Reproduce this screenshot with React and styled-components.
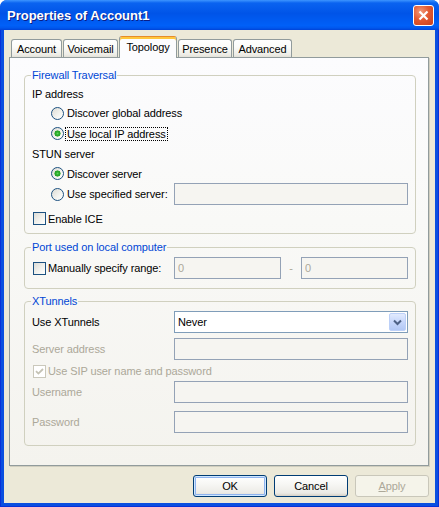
import React from "react";
import styled, { createGlobalStyle } from "styled-components";

const GlobalStyle = createGlobalStyle`
  html, body {
    margin: 0;
    padding: 0;
    background: #fff;
  }
  body {
    font-family: "Liberation Sans", Arial, sans-serif;
    font-size: 11px;
    letter-spacing: -0.1px;
  }
  * {
    box-sizing: border-box;
  }
`;

const Window = styled.div`
  width: 439px;
  height: 507px;
  display: flex;
  flex-direction: column;
  background: #0a4fe0;
  border-radius: 7px 7px 0 0;
  overflow: hidden;
`;

const TitleBar = styled.div`
  height: 30px;
  flex: none;
  display: flex;
  align-items: center;
  justify-content: space-between;
  padding: 0 5px 0 7px;
  background: linear-gradient(
    to bottom,
    #3d95ff 0%,
    #0a63f0 10%,
    #0054e8 45%,
    #0060f8 85%,
    #0058ee 93%,
    #0043d8 100%
  );
`;

const Title = styled.div`
  color: #fff;
  font-weight: bold;
  font-size: 13px;
  letter-spacing: 0;
  text-shadow: 1px 1px 0 #0a1d84;
`;

const CloseButton = styled.div`
  width: 21px;
  height: 21px;
  border: 1px solid #fff;
  border-radius: 3px;
  background: radial-gradient(circle at 35% 30%, #f19a7b 0%, #e35a32 45%, #c8401d 100%);
  display: flex;
  align-items: center;
  justify-content: center;
`;

const Frame = styled.div`
  flex: 1;
  display: flex;
  padding: 0 4px 4px;
  box-shadow: inset 1px 0 #0831d9, inset -1px 0 #0831d9, inset 0 -1px #0831d9;
`;

const Body = styled.div`
  flex: 1;
  display: flex;
  flex-direction: column;
  background: #ece9d8;
  padding: 6px 6px 0 5px;
`;

const TabRow = styled.div`
  height: 21px;
  display: flex;
  align-items: flex-end;
  gap: 1px;
  margin-left: 2px;
`;

const Tab = styled.div`
  width: ${(p) => p.$w}px;
  height: ${(p) => (p.$active ? 22 : 18)}px;
  margin-bottom: ${(p) => (p.$active ? -1 : 0)}px;
  position: relative;
  z-index: ${(p) => (p.$active ? 1 : 0)};
  display: flex;
  align-items: center;
  justify-content: center;
  padding-bottom: ${(p) => (p.$active ? 1 : 0)}px;
  border: 1px solid #919b9c;
  border-bottom: none;
  border-radius: 3px 3px 0 0;
  color: #000;
  background: ${(p) =>
    p.$active
      ? "#fcfcfe"
      : "linear-gradient(to bottom, #ffffff 0%, #fbfbf9 40%, #eeede7 85%, #e3e1d8 100%)"};
  border-top-color: ${(p) => (p.$active ? "#e68b2c" : "#919b9c")};
  box-shadow: ${(p) => (p.$active ? "inset 0 2px 0 #ffc73c" : "none")};
`;

const Panel = styled.div`
  height: 409px;
  flex: none;
  display: flex;
  flex-direction: column;
  padding: 11px 12px 0 14px;
  border: 1px solid #919b9c;
  background: linear-gradient(to bottom, #fcfcfe 0%, #f9f9f7 40%, #f4f3ee 100%);
  box-shadow: 1px 1px 0 #d0cebf;
`;

const Group = styled.fieldset`
  margin: ${(p) => p.$mt || 0}px 0 0;
  padding: 3px 7px ${(p) => p.$pb}px;
  border: 1px solid #d0d0bf;
  border-radius: 4px;
  min-width: 0;
`;

const Legend = styled.legend`
  padding: 0 1px;
  margin-left: -1px;
  color: #0046d5;
  line-height: 13px;
  font-size: 11px;
`;

const Row = styled.div`
  display: grid;
  grid-template-columns: 142px 1fr;
  align-items: center;
  height: ${(p) => p.$h || 20}px;
  margin-top: ${(p) => p.$mt || 0}px;
  color: ${(p) => (p.$disabled ? "#aca899" : "#000")};
  white-space: nowrap;
`;

const Option = styled.label`
  display: flex;
  align-items: center;
  gap: ${(p) => p.$gap || 3}px;
  padding-left: ${(p) => p.$indent || 0}px;
  color: ${(p) => (p.$disabled ? "#aca899" : "#000")};
`;

const Radio = styled.span`
  width: 13px;
  height: 13px;
  flex: none;
  border-radius: 50%;
  border: 1px solid #1c5180;
  background: ${(p) =>
    p.$checked
      ? "radial-gradient(circle, #5fd65f 0, #2fae2f 1.5px, #21a121 2.8px, transparent 3.3px), linear-gradient(135deg, #dcdbd4 0%, #f4f4f0 60%, #ffffff 100%)"
      : "linear-gradient(135deg, #dcdbd4 0%, #f4f4f0 60%, #ffffff 100%)"};
`;

const Box = styled.span`
  width: 13px;
  height: 13px;
  flex: none;
  margin-left: 1px;
  display: flex;
  align-items: center;
  justify-content: center;
  border: 1px solid ${(p) => (p.$disabled ? "#cac8bb" : "#1c5180")};
  background: ${(p) =>
    p.$disabled ? "#fff" : "linear-gradient(135deg, #dcdcd7 0%, #f3f3ef 60%, #ffffff 100%)"};
`;

const Focus = styled.span`
  outline: 1px dotted #000;
  outline-offset: 0;
  padding: 0 1px;
`;

const Field = styled.input`
  width: 100%;
  height: 22px;
  margin: 0;
  padding: 0 3px;
  border: 1px solid #94a2b6;
  background: #f6f5f1;
  font: inherit;
  color: #aca899;
  outline: none;
`;

const PortFields = styled.div`
  display: grid;
  grid-template-columns: 107px 1fr 107px;
  align-items: center;
`;

const Dash = styled.span`
  text-align: center;
  color: #aca899;
`;

const Combo = styled.div`
  height: 22px;
  display: flex;
  align-items: center;
  justify-content: space-between;
  padding: 1px 1px 1px 3px;
  border: 1px solid #7f9db9;
  background: #fff;
  color: #000;
`;

const DropButton = styled.span`
  width: 17px;
  height: 18px;
  display: flex;
  align-items: center;
  justify-content: center;
  border: 1px solid #bcd0f8;
  border-radius: 2px;
  background: linear-gradient(to bottom, #e2ebfe 0%, #c7d7fb 50%, #b3c8f5 100%);
`;

const ButtonRow = styled.div`
  display: flex;
  justify-content: flex-end;
  gap: 7px;
  margin-top: 9px;
`;

const Button = styled.div`
  width: 74px;
  height: 22px;
  display: flex;
  align-items: center;
  justify-content: center;
  border: 1px solid ${(p) => (p.$disabled ? "#c9c7ba" : "#003c74")};
  border-radius: 3px;
  color: ${(p) => (p.$disabled ? "#aca899" : "#000")};
  background: ${(p) =>
    p.$disabled
      ? "#f5f4ea"
      : "linear-gradient(to bottom, #ffffff 0%, #f7f7f4 40%, #ecebe6 85%, #d6d0c5 100%)"};
  box-shadow: ${(p) =>
    p.$default ? "inset 0 0 0 1px #cee7ff, inset 0 0 0 2px #8fb3ee" : "none"};
`;

const Underline = styled.span`
  text-decoration: underline;
`;

const CheckMark = ({ color }) => (
  <svg width="9" height="9" viewBox="0 0 9 9">
    <path d="M1 4.2 L3.4 6.6 L8 2" fill="none" stroke={color} strokeWidth="1.8" />
  </svg>
);

const App = () => {
  const tabs = [
    { label: "Account", w: 51 },
    { label: "Voicemail", w: 55 },
    { label: "Topology", w: 58, active: true },
    { label: "Presence", w: 54 },
    { label: "Advanced", w: 59 },
  ];

  return (
    <>
      <GlobalStyle />
      <Window>
        <TitleBar>
          <Title>Properties of Account1</Title>
          <CloseButton>
            <svg width="11" height="11" viewBox="0 0 11 11">
              <path d="M1.5 1.5 L9.5 9.5 M9.5 1.5 L1.5 9.5" stroke="#fff" strokeWidth="2.2" />
            </svg>
          </CloseButton>
        </TitleBar>
        <Frame>
          <Body>
            <TabRow>
              {tabs.map((t) => (
                <Tab key={t.label} $w={t.w} $active={t.active}>
                  {t.label}
                </Tab>
              ))}
            </TabRow>
            <Panel>
              <Group $pb={4}>
                <Legend>Firewall Traversal</Legend>
                <Row $h={18}>IP address</Row>
                <Row $h={20}>
                  <Option $indent={19}>
                    <Radio />
                    Discover global address
                  </Option>
                </Row>
                <Row $h={21}>
                  <Option $indent={19} $gap={2}>
                    <Radio $checked />
                    <Focus>Use local IP address</Focus>
                  </Option>
                </Row>
                <Row $h={20}>STUN server</Row>
                <Row $h={19}>
                  <Option $indent={19}>
                    <Radio $checked />
                    Discover server
                  </Option>
                </Row>
                <Row $h={22}>
                  <Option $indent={19}>
                    <Radio />
                    Use specified server:
                  </Option>
                  <Field disabled defaultValue="" />
                </Row>
                <Row $h={21} $mt={3}>
                  <Option $gap={2}>
                    <Box />
                    Enable ICE
                  </Option>
                </Row>
              </Group>

              <Group $mt={7} $pb={9}>
                <Legend>Port used on local computer</Legend>
                <Row $h={22}>
                  <Option $gap={2}>
                    <Box />
                    Manually specify range:
                  </Option>
                  <PortFields>
                    <Field disabled defaultValue="0" />
                    <Dash>-</Dash>
                    <Field disabled defaultValue="0" />
                  </PortFields>
                </Row>
              </Group>

              <Group $mt={6} $pb={12}>
                <Legend>XTunnels</Legend>
                <Row $h={22}>
                  Use XTunnels
                  <Combo>
                    Never
                    <DropButton>
                      <svg width="9" height="7" viewBox="0 0 9 7">
                        <path d="M1 1.5 L4.5 5 L8 1.5" fill="none" stroke="#4d6185" strokeWidth="2" />
                      </svg>
                    </DropButton>
                  </Combo>
                </Row>
                <Row $h={22} $mt={5} $disabled>
                  Server address
                  <Field disabled defaultValue="" />
                </Row>
                <Row $h={20} $mt={1}>
                  <Option $gap={2} $disabled>
                    <Box $disabled>
                      <CheckMark color="#c4c2b4" />
                    </Box>
                    Use SIP user name and password
                  </Option>
                </Row>
                <Row $h={22} $disabled>
                  Username
                  <Field disabled defaultValue="" />
                </Row>
                <Row $h={22} $mt={8} $disabled>
                  Password
                  <Field disabled defaultValue="" />
                </Row>
              </Group>
            </Panel>
            <ButtonRow>
              <Button $default>OK</Button>
              <Button>Cancel</Button>
              <Button $disabled>
                <Underline>A</Underline>pply
              </Button>
            </ButtonRow>
          </Body>
        </Frame>
      </Window>
    </>
  );
};

export default App;
